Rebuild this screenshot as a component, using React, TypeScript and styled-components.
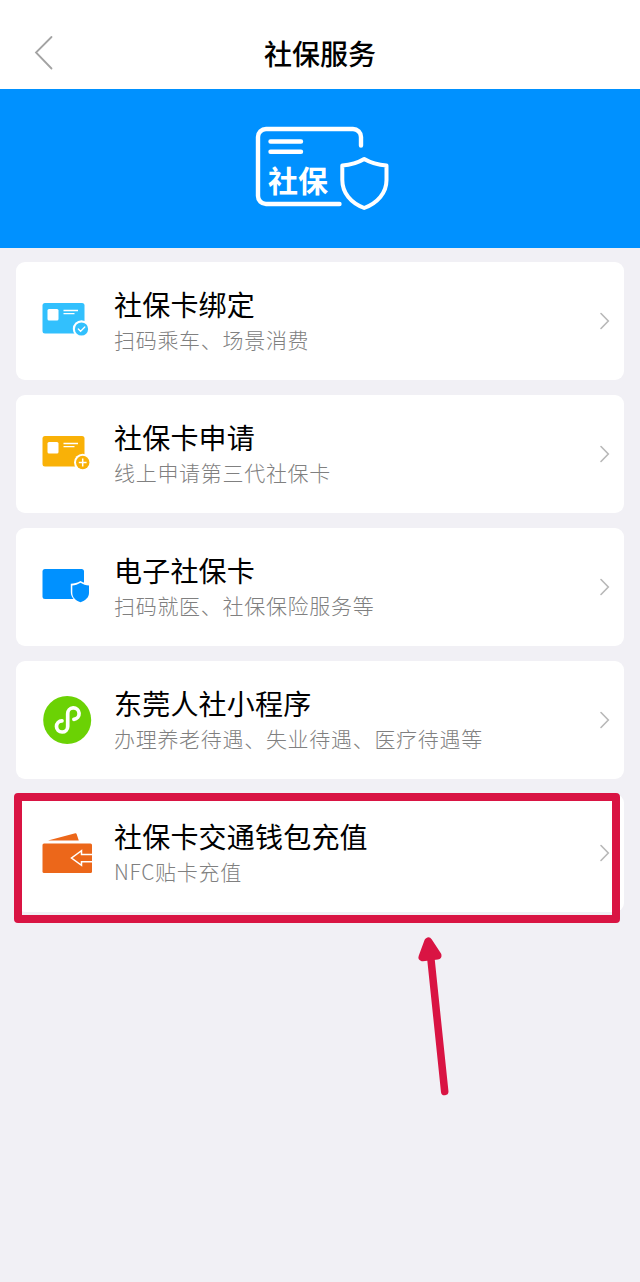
import React from "react";
import styled, { createGlobalStyle } from "styled-components";

const GlobalStyle = createGlobalStyle`
  * { box-sizing: border-box; }
  body {
    margin: 0;
    background: #f1f0f5;
    font-family: "Noto Sans CJK SC", sans-serif;
  }
`;

const Page = styled.div`
  position: relative;
  width: 640px;
  height: 1282px;
  overflow: hidden;
  background: #f1f0f5;
`;

const Header = styled.header`
  display: grid;
  grid-template-columns: 88px 1fr 88px;
  align-items: center;
  height: 89px;
  padding-top: 17px;
  background: #fff;
`;

const BackButton = styled.button`
  display: flex;
  align-items: center;
  height: 72px;
  padding: 0 0 0 34px;
  border: 0;
  background: none;
`;

const PageTitle = styled.h1`
  margin: 0;
  text-align: center;
  font-size: 28px;
  line-height: 40px;
  font-weight: 500;
  color: #000;
`;

const Banner = styled.section`
  display: flex;
  justify-content: center;
  height: 159px;
  padding: 34px 0 0 4px;
  background: #0091ff;
`;

const List = styled.main`
  display: flex;
  flex-direction: column;
  gap: 15px;
  padding: 14px 16px;
`;

const Card = styled.a`
  display: flex;
  align-items: flex-start;
  height: 118px;
  padding: 0 13px 0 24px;
  border-radius: 9px;
  background: #fff;
`;

const IconSlot = styled.span`
  display: flex;
  width: 74px;
  padding-top: 32px;
`;

const CardText = styled.div`
  flex: 1;
  display: flex;
  flex-direction: column;
  padding-top: 22px;
`;

const CardTitle = styled.span`
  font-size: 28px;
  line-height: 40px;
  letter-spacing: 0.2px;
  color: #000;
`;

const CardNote = styled.span`
  font-size: 21px;
  line-height: 31px;
  letter-spacing: 0.7px;
  font-weight: 300;
  color: #808080;
`;

const ArrowSlot = styled.span`
  display: flex;
  padding-top: 50px;
`;

const Highlight = styled.div`
  position: absolute;
  left: 14px;
  top: 793px;
  width: 606px;
  height: 130px;
  border: 8px solid #d91443;
  border-radius: 4px;
`;

const Pointer = styled.svg`
  position: absolute;
  left: 410px;
  top: 930px;
`;

const Chevron = () => (
  <svg width="12" height="18" viewBox="0 0 12 18" fill="none" stroke="#b8b8b8" strokeWidth="1.6">
    <path d="M2 1.5 9.3 9 2 16.5" strokeLinecap="round" />
  </svg>
);

const BannerArt = () => (
  <svg width="136" height="90" viewBox="254 123 136 90" fill="none" stroke="#fff" strokeWidth="4.4" strokeLinecap="round" strokeLinejoin="round">
    <path d="M361 145.500V137a8 8 0 0 0-8-8H266a8 8 0 0 0-8 8V196a8 8 0 0 0 8 8H339.500" />
    <path d="M270.500 141.500H301M270.500 151.700H301" />
    <path d="M364.200 159C357.500 163 350 165 342.300 165.500V180C342.300 193 351 203 364.200 208C377.500 203 386.500 193 386.500 180V165.500C378.500 165 371 163 364.200 159Z" strokeWidth="4" />
    <text x="268" y="191.500" fill="#fff" stroke="none" fontSize="30" fontWeight="700">社保</text>
  </svg>
);

const CardShape = ({ color }: { color: string }) => (
  <>
    <rect x="2.500" y="9" width="42" height="30.500" rx="2.500" fill={color} />
    <rect x="7.500" y="15" width="11" height="11.500" rx="1.500" fill="#fff" />
    <path d="M23.500 16.500H38M23.500 19.700H34.500" stroke="#fff" strokeWidth="1.300" />
  </>
);

const BindIcon = () => (
  <svg width="54" height="54" viewBox="0 0 54 54" fill="none">
    <CardShape color="#32c0fd" />
    <circle cx="41.500" cy="35" r="8.700" fill="#fff" />
    <circle cx="41.500" cy="35" r="6.600" fill="#32c0fd" />
    <path d="m38.300 35 2.300 2.300 4.200-4.300" stroke="#fff" strokeWidth="1.300" strokeLinecap="round" />
  </svg>
);

const ApplyIcon = () => (
  <svg width="54" height="54" viewBox="0 0 54 54" fill="none">
    <CardShape color="#f9b107" />
    <circle cx="42.700" cy="35.500" r="8.700" fill="#fff" />
    <circle cx="42.700" cy="35.500" r="6.700" fill="#f9b107" />
    <path d="M38.800 35.500H46.600M42.700 31.600V39.400" stroke="#fff" strokeWidth="1.500" />
  </svg>
);

const DigitalIcon = () => (
  <svg width="54" height="54" viewBox="0 0 54 54">
    <rect x="2.500" y="9" width="41.500" height="30" rx="2.500" fill="#0091ff" />
    <path d="M40.500 22C37.500 24 34 24.500 30.800 24.800V33C30.800 38.500 35 42.500 40.500 44.500C46 42.500 50.500 38.500 50.500 33V24.800C47 24.500 43.500 24 40.500 22Z" transform="translate(0 -1)" fill="#fff" />
    <path d="M40.500 22.800C38 24.500 35 25.300 32.300 25.500V33C32.300 37.500 35.500 40.300 40.500 42.300C45.500 40.300 49 37.500 49 33V25.500C46 25.300 43 24.500 40.500 22.800Z" fill="#0091ff" />
  </svg>
);

const MiniProgramIcon = () => (
  <svg width="54" height="54" viewBox="0 0 54 54" fill="none">
    <circle cx="27.200" cy="27" r="24" fill="#6bd204" />
    <path d="M22 27.800a5.600 5.600 0 1 0 5.700 5.600V20.800a5.700 5.700 0 1 1 6.200 5.500" stroke="#fff" strokeWidth="3.700" strokeLinecap="round" />
  </svg>
);

const WalletIcon = () => (
  <svg width="54" height="54" viewBox="0 0 54 54" fill="none">
    <path d="M8 14.500 35.300 7.300q1-.2 1.300.7l2.200 6.500Z" fill="#ec671a" />
    <rect x="2.500" y="17.500" width="49.500" height="29.500" rx="1.500" fill="#ec671a" />
    <path d="M53 28.500H41.500V24.700L31.500 32l10 7.300V35.700H53" stroke="#fff" strokeWidth="1.500" />
  </svg>
);

const services = [
  { title: "社保卡绑定", note: "扫码乘车、场景消费", Icon: BindIcon },
  { title: "社保卡申请", note: "线上申请第三代社保卡", Icon: ApplyIcon },
  { title: "电子社保卡", note: "扫码就医、社保保险服务等", Icon: DigitalIcon },
  { title: "东莞人社小程序", note: "办理养老待遇、失业待遇、医疗待遇等", Icon: MiniProgramIcon },
  { title: "社保卡交通钱包充值", note: "NFC贴卡充值", Icon: WalletIcon },
];

export default function App() {
  return (
    <Page>
      <GlobalStyle />
      <Header>
        <BackButton aria-label="返回">
          <svg width="20" height="36" viewBox="0 0 20 36" fill="none" stroke="#a3a3a3" strokeWidth="1.800">
            <path d="M17.500 2 2 17.500 17.500 33.500" strokeLinecap="round" />
          </svg>
        </BackButton>
        <PageTitle>社保服务</PageTitle>
      </Header>
      <Banner>
        <BannerArt />
      </Banner>
      <List>
        {services.map(({ title, note, Icon }) => (
          <Card key={title}>
            <IconSlot>
              <Icon />
            </IconSlot>
            <CardText>
              <CardTitle>{title}</CardTitle>
              <CardNote>{note}</CardNote>
            </CardText>
            <ArrowSlot>
              <Chevron />
            </ArrowSlot>
          </Card>
        ))}
      </List>
      <Highlight />
      <Pointer width="50" height="170" viewBox="410 930 50 170" stroke="#d91443" strokeLinecap="round" strokeLinejoin="round">
        <path d="M430.500 955 444.700 1091.500" strokeWidth="7.500" />
        <path d="M428.300 941.500 422.500 957.200 437.500 955.500Z" fill="#d91443" strokeWidth="8" />
      </Pointer>
    </Page>
  );
}
